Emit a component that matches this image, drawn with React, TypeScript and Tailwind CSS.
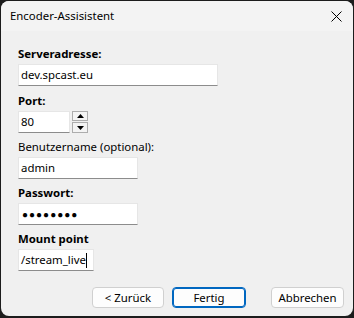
const font = { fontFamily: '"Noto Sans", "Segoe UI", sans-serif' };

function Label({ text, bold = true, first = false }: { text: string; bold?: boolean; first?: boolean }) {
    return (
        <div className={`h-[16px] leading-[16px] text-[11.4px] text-black ${bold ? 'font-bold' : ''} ${first ? '' : 'mt-[6px]'}`}>
            {text}
        </div>
    );
}

function Field({ width, children }: { width: string; children: React.ReactNode }) {
    return (
        <div
            className={`mt-[2px] h-[22px] ${width} bg-white border border-[#e6e6e6] border-b-[#8c8c8c] flex items-center pl-[2px] text-[11.4px] text-black`}
        >
            {children}
        </div>
    );
}

function Button({ label, primary = false }: { label: string; primary?: boolean }) {
    return (
        <button
            className={`w-full h-[21px] rounded-[4px] bg-[#fdfdfd] text-[11.4px] text-black leading-none flex items-center justify-center ${
                primary ? 'border border-[#0067c0] shadow-[inset_0_0_0_1px_#0067c0]' : 'border border-[#d0d0d0]'
            }`}
        >
            {label}
        </button>
    );
}

export default function App() {
    return (
        <div className="w-[354px] h-[318px] bg-[#1c1c1c] pl-px pt-px pr-px pb-[2px]" style={font}>
            <div className="w-full h-full rounded-[8px] overflow-hidden bg-[#f0f0f0] flex flex-col">
                {/* Title bar */}
                <div className="h-[30px] bg-[#f3f3f3] flex items-center justify-between pl-[9px] pr-[11px]">
                    <span className="text-[11.4px] text-black">Encoder-Assisistent</span>
                    <svg width="11" height="11" viewBox="0 0 11 11">
                        <path d="M0.5 0.5 L10.5 10.5 M10.5 0.5 L0.5 10.5" stroke="#000" strokeWidth="1" fill="none" />
                    </svg>
                </div>

                {/* Body */}
                <div className="flex flex-col pl-[17px] pt-[15px]">
                    <Label text="Serveradresse:" first />
                    <Field width="w-[200px]">dev.spcast.eu</Field>

                    <div className="mt-[7px]" />
                    <Label text="Port:" first />
                    <div className="mt-[2px] flex gap-[2px]">
                        <div className="h-[22px] w-[52px] bg-white border border-[#e6e6e6] border-b-[#8c8c8c] flex items-center pl-[2px] text-[11.4px] text-black">
                            80
                        </div>
                        <div className="flex flex-col gap-px">
                            <div className="w-[16px] h-[10px] bg-[#f4f4f4] border border-[#adadad] flex items-center justify-center">
                                <svg width="7" height="4" viewBox="0 0 7 4">
                                    <path d="M3.5 0 L7 4 L0 4 Z" fill="#000" />
                                </svg>
                            </div>
                            <div className="w-[16px] h-[11px] bg-[#f4f4f4] border border-[#adadad] flex items-center justify-center">
                                <svg width="7" height="4" viewBox="0 0 7 4">
                                    <path d="M0 0 L7 0 L3.5 4 Z" fill="#000" />
                                </svg>
                            </div>
                        </div>
                    </div>

                    <Label text="Benutzername (optional):" bold={false} />
                    <Field width="w-[120px]">admin</Field>

                    <Label text="Passwort:" />
                    <Field width="w-[120px]">
                        <span className="text-[10px] tracking-[1px] leading-none pl-px">●●●●●●●●</span>
                    </Field>

                    <Label text="Mount point" />
                    <Field width="w-[76px]">
                        /stream_live
                        <span className="inline-block w-px h-[15px] bg-black" />
                    </Field>
                </div>

                {/* Buttons */}
                <div className="mt-[16px] flex pl-[91px]">
                    <div className="w-[72px]">
                        <Button label="< Zurück" />
                    </div>
                    <div className="w-[74px] ml-[8px]">
                        <Button label="Fertig" primary />
                    </div>
                    <div className="w-[73px] ml-[25px]">
                        <Button label="Abbrechen" />
                    </div>
                </div>
            </div>
        </div>
    );
}
